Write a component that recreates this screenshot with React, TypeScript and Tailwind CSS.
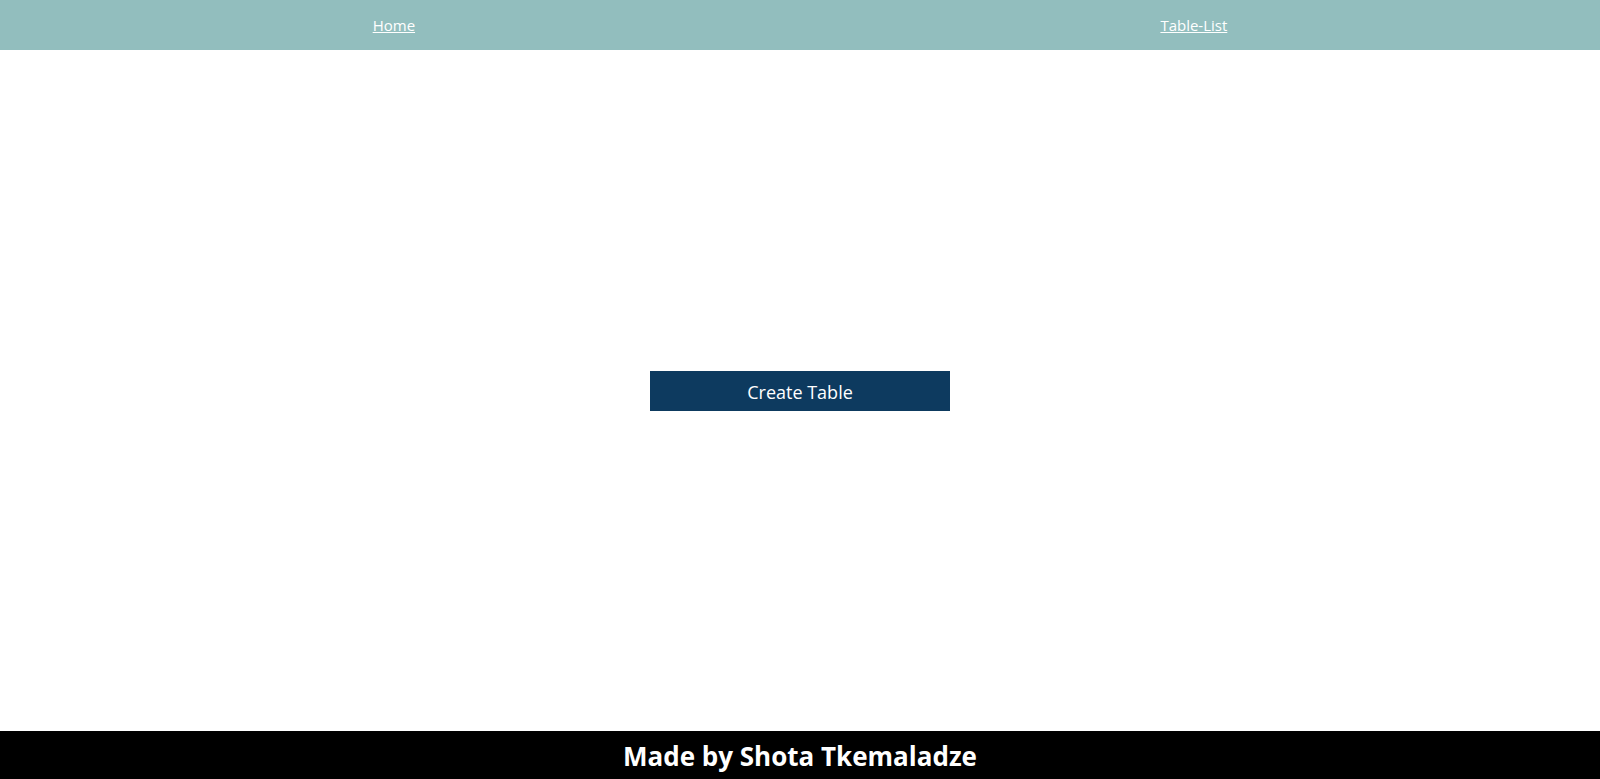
const App = () => {
    return (
        <div className="flex flex-col min-h-screen font-['Open_Sans',sans-serif]">
            <nav className="flex justify-around items-center h-[50px] bg-[#92bebe] shrink-0">
                <a href="#" className="text-white underline text-[15px]">Home</a>
                <a href="#" className="text-white underline text-[15px]">Table-List</a>
            </nav>

            <main className="flex-1 flex items-center justify-center">
                <button className="w-[300px] h-[40px] pt-[3px] bg-[#0d3a5f] text-white text-[18px]">
                    Create Table
                </button>
            </main>

            <footer className="h-[48px] pt-[2px] bg-black flex items-center justify-center shrink-0">
                <p className="text-white font-bold text-[26px]">Made by Shota Tkemaladze</p>
            </footer>
        </div>
    )
}

export default App
